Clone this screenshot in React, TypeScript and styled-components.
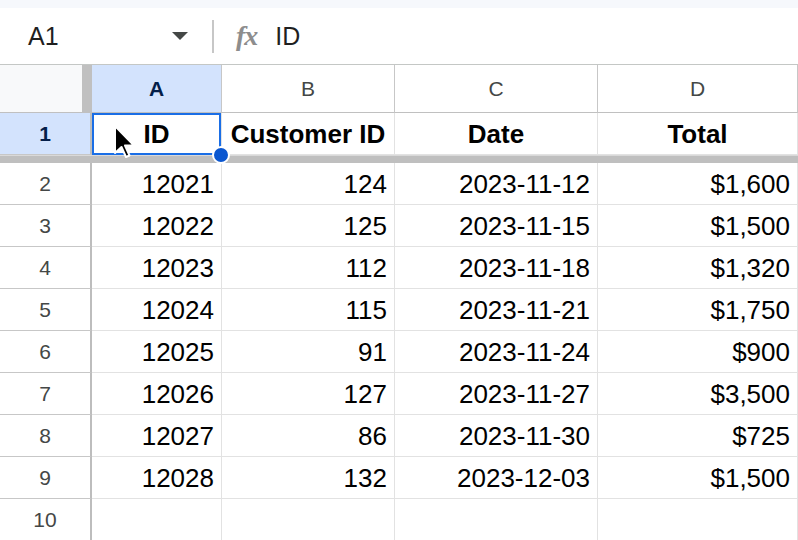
import React from 'react';
import styled, { createGlobalStyle } from 'styled-components';

const GlobalStyle = createGlobalStyle`
  html, body {
    margin: 0;
    padding: 0;
    background: #ffffff;
    overflow: hidden;
  }
  body {
    font-family: 'Liberation Sans', Arial, sans-serif;
  }
`;

const Page = styled.div`
  width: 798px;
  height: 540px;
  overflow: hidden;
  background: #ffffff;
`;

const TopStrip = styled.div`
  height: 8px;
  background: #f6f8fc;
`;

const Toolbar = styled.div`
  height: 56px;
  display: flex;
  align-items: center;
  border-bottom: 1px solid #c4c7c5;
  background: #ffffff;
  color: #1f1f1f;
`;

const NameBox = styled.div`
  width: 188px;
  box-sizing: border-box;
  padding-left: 28px;
  display: flex;
  align-items: center;
  justify-content: space-between;
  font-size: 25px;
`;

const Caret = styled.span`
  width: 0;
  height: 0;
  border-left: 8px solid transparent;
  border-right: 8px solid transparent;
  border-top: 8px solid #444746;
`;

const Divider = styled.div`
  width: 2px;
  height: 33px;
  margin-left: 24px;
  background: #c7c7c7;
`;

const Fx = styled.span`
  margin-left: 22px;
  font-family: 'Liberation Serif', 'Times New Roman', serif;
  font-style: italic;
  font-weight: bold;
  font-size: 28px;
  color: #8d8d8d;
  letter-spacing: -1px;
`;

const FormulaText = styled.span`
  margin-left: 18px;
  font-size: 25px;
`;

const Sheet = styled.div`
  display: grid;
  grid-template-columns: 92px 130px 173px 203px 1fr;
  grid-template-rows: 48px 42px 8px repeat(9, 42px);
`;

const Corner = styled.div`
  box-sizing: border-box;
  background: #f8f9fa;
  border-right: 10px solid #c0c0c0;
  border-bottom: 1px solid #c0c0c0;
`;

const ColHead = styled.div<{ $active?: boolean }>`
  box-sizing: border-box;
  display: flex;
  align-items: center;
  justify-content: center;
  font-size: 21px;
  background: ${p => (p.$active ? '#d3e3fd' : '#ffffff')};
  color: ${p => (p.$active ? '#041e49' : '#444746')};
  font-weight: ${p => (p.$active ? 'bold' : 'normal')};
  border-right: 1px solid #c7c7c7;
  border-bottom: 1px solid #c0c0c0;
`;

const RowHead = styled.div<{ $active?: boolean }>`
  box-sizing: border-box;
  display: flex;
  align-items: center;
  justify-content: center;
  font-size: 21px;
  background: ${p => (p.$active ? '#d3e3fd' : '#ffffff')};
  color: ${p => (p.$active ? '#041e49' : '#444746')};
  font-weight: ${p => (p.$active ? 'bold' : 'normal')};
  border-right: 2px solid #bdbdbd;
  border-bottom: 1px solid #c7c7c7;
`;

const Cell = styled.div<{ $head?: boolean }>`
  position: relative;
  box-sizing: border-box;
  display: flex;
  align-items: center;
  justify-content: ${p => (p.$head ? 'center' : 'flex-end')};
  padding: 2px 7px 0;
  font-size: 26px;
  font-weight: ${p => (p.$head ? 'bold' : 'normal')};
  color: #000000;
  white-space: nowrap;
  border-right: 1px solid #e2e2e2;
  border-bottom: 1px solid #e2e2e2;
`;

const FreezeBar = styled.div`
  grid-column: 1 / -1;
  box-sizing: border-box;
  background: #bfbfbf;
  border-top: 1px solid #d9d9d9;
`;

const Selection = styled.div`
  position: absolute;
  left: 0;
  top: 0;
  right: 0;
  bottom: -1px;
  border: 2px solid #1a6ee6;
  pointer-events: none;
  z-index: 2;
`;

const FillHandle = styled.div`
  position: absolute;
  right: -9px;
  bottom: -10px;
  width: 14px;
  height: 14px;
  border-radius: 50%;
  background: #0b57d0;
  border: 2px solid #ffffff;
  z-index: 3;
`;

const Pointer = styled.svg`
  position: absolute;
  left: 21px;
  top: 11px;
  z-index: 4;
`;

const header = ['ID', 'Customer ID', 'Date', 'Total'];

const rows: [string, string, string, string][] = [
  ['12021', '124', '2023-11-12', '$1,600'],
  ['12022', '125', '2023-11-15', '$1,500'],
  ['12023', '112', '2023-11-18', '$1,320'],
  ['12024', '115', '2023-11-21', '$1,750'],
  ['12025', '91', '2023-11-24', '$900'],
  ['12026', '127', '2023-11-27', '$3,500'],
  ['12027', '86', '2023-11-30', '$725'],
  ['12028', '132', '2023-12-03', '$1,500'],
];

export default function App() {
  return (
    <>
      <GlobalStyle />
      <Page>
        <TopStrip />
        <Toolbar>
          <NameBox>
            <span>A1</span>
            <Caret />
          </NameBox>
          <Divider />
          <Fx>fx</Fx>
          <FormulaText>ID</FormulaText>
        </Toolbar>
        <Sheet>
          <Corner />
          {['A', 'B', 'C', 'D'].map((l, i) => (
            <ColHead key={l} $active={i === 0}>
              {l}
            </ColHead>
          ))}

          <RowHead $active>1</RowHead>
          {header.map((h, i) => (
            <Cell key={h} $head>
              {h}
              {i === 0 && (
                <>
                  <Selection />
                  <FillHandle />
                  <Pointer width="24" height="36" viewBox="0 0 24 36">
                    <path
                      d="M2 2 L2 29 L8.5 23 L13 33 L16.5 31.5 L12 21.5 L21 21.5 Z"
                      fill="#000"
                      stroke="#fff"
                      strokeWidth="2"
                      strokeLinejoin="round"
                    />
                  </Pointer>
                </>
              )}
            </Cell>
          ))}

          <FreezeBar />

          {rows.map((r, i) => (
            <React.Fragment key={r[0]}>
              <RowHead>{i + 2}</RowHead>
              {r.map((v, j) => (
                <Cell key={j}>{v}</Cell>
              ))}
            </React.Fragment>
          ))}

          <RowHead>10</RowHead>
          <Cell />
          <Cell />
          <Cell />
          <Cell />
        </Sheet>
      </Page>
    </>
  );
}
